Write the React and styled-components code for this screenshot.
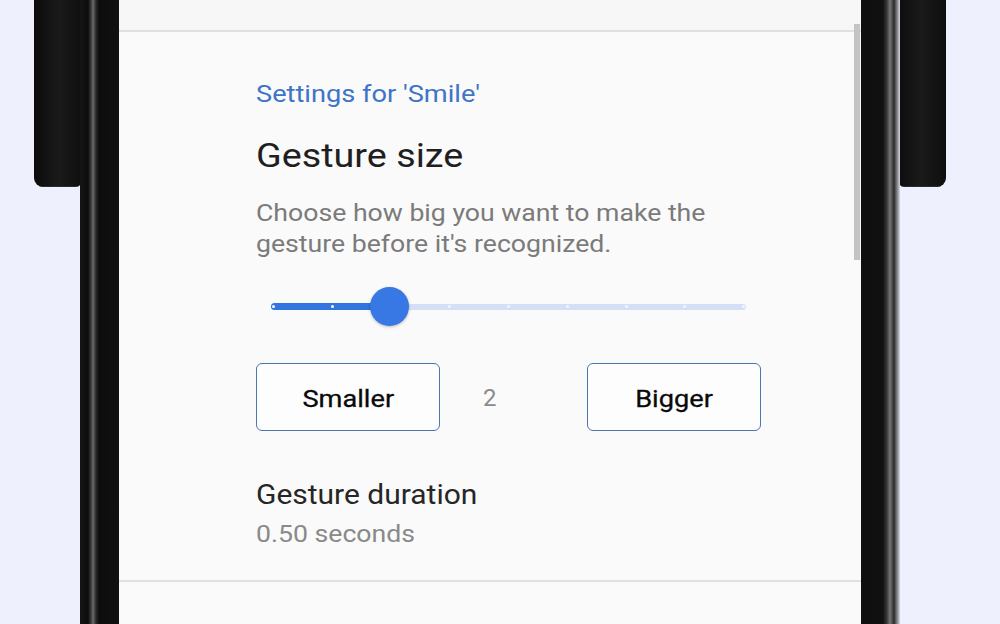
import React from 'react';
import styled, { createGlobalStyle, css } from 'styled-components';

const GlobalStyle = createGlobalStyle`
    html, body {
        margin: 0;
        padding: 0;
        background: #eef1fd;
        font-family: Roboto, "Noto Sans", Arial, sans-serif;
    }
`;

const STEPS = 8;
const VALUE = 2;

const wide = css`
    transform: scaleX(1.11);
    transform-origin: left center;
`;

const Stage = styled.div`
    height: 624px;
    width: 1000px;
    overflow: hidden;
    background: #eef1fd;
    padding-left: 80px;
    box-sizing: border-box;
`;

const Phone = styled.div`
    position: relative;
    width: 820px;
    height: 100%;
`;

const SideButton = styled.div`
    position: absolute;
    top: 0;
    ${p => (p.side === 'left' ? 'left: -46px;' : 'right: -46px;')}
    width: 50px;
    height: 187px;
    background: linear-gradient(90deg, #0b0b0b 0%, #1a1a1a 50%, #0e0e0e 100%);
    border-radius: 0 0 9px 9px;
    box-shadow: inset 0 -35px 0 -34px #2c2c2c;
`;

const Frame = styled.div`
    position: relative;
    display: flex;
    height: 100%;
`;

const Bezel = styled.div`
    width: 39px;
    flex-shrink: 0;
    background: ${p =>
        p.side === 'left'
            ? 'linear-gradient(90deg, #151515 0px, #0c0c0c 8px, #3a3a3a 11px, #6a6a6a 13px, #2a2a2a 16px, #0d0d0d 19px, #101010 39px)'
            : 'linear-gradient(90deg, #0f0f0f 0px, #101010 22px, #3b3b3b 26px, #767676 29px, #2b2b2b 33px, #9a9ba0 37px, #d8dbe8 39px)'};
`;

const Screen = styled.div`
    position: relative;
    flex: 1;
    display: flex;
    flex-direction: column;
    background: #fafafa;
`;

const TopStrip = styled.div`
    height: 30px;
    background: #f7f7f7;
`;

const Divider = styled.div`
    height: 2px;
    background: #e0e0e0;
`;

const Content = styled.div`
    display: flex;
    flex-direction: column;
    align-items: flex-start;
    padding: 46px 0 0 137px;
    height: 548px;
    box-sizing: border-box;
`;

const Scrollbar = styled.div`
    position: absolute;
    top: 24px;
    right: 1px;
    width: 6px;
    height: 236px;
    background: #c4c4c4;
`;

const Overline = styled.div`
    font-size: 24.5px;
    color: #3f74c6;
    line-height: 32px;
    ${wide}
`;

const Title = styled.h1`
    margin: 23px 0 0;
    font-size: 34px;
    font-weight: 400;
    color: #1f1f1f;
    line-height: 44px;
    ${wide}
`;

const Description = styled.p`
    margin: 21px 0 0;
    width: 440px;
    font-size: 24px;
    line-height: 31px;
    color: #7b7b7b;
    ${wide}
`;

const SliderWrap = styled.div`
    position: relative;
    margin: 27px 0 0 15px;
    width: 475px;
    height: 39px;
    display: flex;
    align-items: center;
`;

const Track = styled.div`
    position: relative;
    width: 100%;
    height: 6px;
    border-radius: 3px;
    background: #d5e0f7;
`;

const ActiveTrack = styled.div`
    position: absolute;
    left: 0;
    top: -0.5px;
    height: 7px;
    border-radius: 4px;
    background: #3274e0;
`;

const Ticks = styled.div`
    position: absolute;
    inset: 0 1px;
    display: flex;
    justify-content: space-between;
    align-items: center;
`;

const Tick = styled.span`
    width: 3px;
    height: 3px;
    border-radius: 50%;
    background: ${p => (p.active ? '#ffffff' : '#f2f5fc')};
`;

const Thumb = styled.div`
    position: absolute;
    top: 0;
    width: 39px;
    height: 39px;
    margin-left: -19.5px;
    border-radius: 50%;
    background: #3778e4;
    box-shadow: 0 1px 3px rgba(0, 0, 0, 0.25);
`;

const ButtonRow = styled.div`
    display: flex;
    align-items: center;
    margin-top: 37px;
`;

const StepButton = styled.button`
    width: ${p => p.width}px;
    height: 68px;
    box-sizing: border-box;
    border: 1.5px solid #4d74b3;
    border-radius: 6px;
    background: #fdfdfd;
    display: flex;
    align-items: center;
    justify-content: center;
    padding: 2px 0 0;
`;

const ButtonLabel = styled.span`
    font-family: Roboto, "Noto Sans", sans-serif;
    font-size: 24.5px;
    font-weight: 400;
    color: #0a0a0a;
    -webkit-text-stroke: 0.3px #0a0a0a;
    transform: scaleX(1.11);
`;

const StepValue = styled.span`
    width: 147px;
    padding: 2px 0 0 43px;
    box-sizing: border-box;
    font-size: 24px;
    color: #8a8a8a;
`;

const DurationTitle = styled.div`
    margin-top: 47px;
    font-size: 27px;
    color: #262626;
    line-height: 34px;
    ${wide}
`;

const DurationValue = styled.div`
    margin-top: 7px;
    font-size: 24px;
    color: #8a8a8a;
    line-height: 30px;
    ${wide}
`;

const BottomStrip = styled.div`
    flex: 1;
    background: #fafafa;
`;

const App = () => {
    const pct = (VALUE / STEPS) * 100;

    return (
        <>
            <GlobalStyle />
            <Stage>
                <Phone>
                    <SideButton side="left" />
                    <SideButton side="right" />
                    <Frame>
                        <Bezel side="left" />
                        <Screen>
                            <TopStrip />
                            <Divider />
                            <Content>
                                <Overline>Settings for 'Smile'</Overline>
                                <Title>Gesture size</Title>
                                <Description>
                                    Choose how big you want to make the gesture before it's recognized.
                                </Description>
                                <SliderWrap>
                                    <Track>
                                        <ActiveTrack style={{ width: `${pct}%` }} />
                                        <Ticks>
                                            {Array.from({ length: STEPS + 1 }).map((_, i) => (
                                                <Tick key={i} active={i <= VALUE} />
                                            ))}
                                        </Ticks>
                                    </Track>
                                    <Thumb style={{ left: `${pct}%` }} />
                                </SliderWrap>
                                <ButtonRow>
                                    <StepButton width={184}>
                                        <ButtonLabel>Smaller</ButtonLabel>
                                    </StepButton>
                                    <StepValue>{VALUE}</StepValue>
                                    <StepButton width={174}>
                                        <ButtonLabel>Bigger</ButtonLabel>
                                    </StepButton>
                                </ButtonRow>
                                <DurationTitle>Gesture duration</DurationTitle>
                                <DurationValue>0.50 seconds</DurationValue>
                            </Content>
                            <Divider />
                            <BottomStrip />
                            <Scrollbar />
                        </Screen>
                        <Bezel side="right" />
                    </Frame>
                </Phone>
            </Stage>
        </>
    );
};

export default App;
